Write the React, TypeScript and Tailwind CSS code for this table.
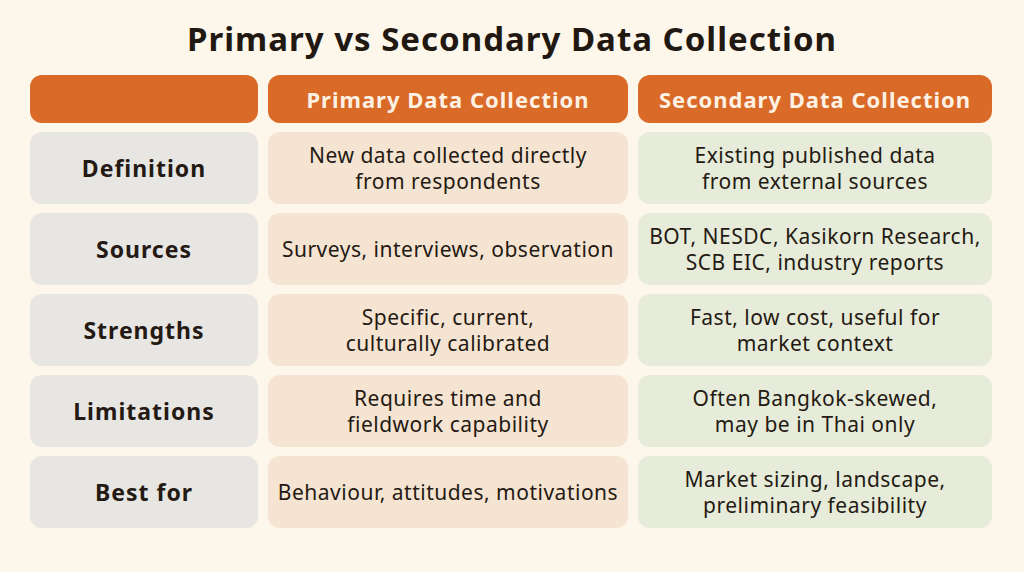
const ROWS = [
  {
    label: "Definition",
    primary: ["New data collected directly", "from respondents"],
    secondary: ["Existing published data", "from external sources"],
  },
  {
    label: "Sources",
    primary: ["Surveys, interviews, observation"],
    secondary: ["BOT, NESDC, Kasikorn Research,", "SCB EIC, industry reports"],
  },
  {
    label: "Strengths",
    primary: ["Specific, current,", "culturally calibrated"],
    secondary: ["Fast, low cost, useful for", "market context"],
  },
  {
    label: "Limitations",
    primary: ["Requires time and", "fieldwork capability"],
    secondary: ["Often Bangkok-skewed,", "may be in Thai only"],
  },
  {
    label: "Best for",
    primary: ["Behaviour, attitudes, motivations"],
    secondary: ["Market sizing, landscape,", "preliminary feasibility"],
  },
];

function Lines({ lines }: { lines: string[] }) {
  return (
    <>
      {lines.map((l) => (
        <span key={l} className="block whitespace-nowrap">
          {l}
        </span>
      ))}
    </>
  );
}

export default function App() {
  return (
    <div
      className="h-[572px] w-[1024px] overflow-hidden bg-[#fdf6ea] text-[#241a13]"
      style={{ fontFamily: '"Noto Sans", "Open Sans", sans-serif' }}
    >
      {/* Title */}
      <h1 className="pt-[18px] text-center text-[33px] font-bold leading-[42px] tracking-[1px] text-[#211811]">
        Primary vs Secondary Data Collection
      </h1>

      {/* Table */}
      <div className="mt-[15px] ml-[30px] grid grid-cols-[228px_360px_354px] gap-x-[10px] gap-y-[9px]">
        {/* Header row */}
        <div className="h-[48px] rounded-xl bg-[#d96a27]" />
        <div className="flex h-[48px] items-center justify-center rounded-xl bg-[#d96a27] text-[22px] font-bold tracking-[1px] text-[#fdf1e3]">
          Primary Data Collection
        </div>
        <div className="flex h-[48px] items-center justify-center rounded-xl bg-[#d96a27] text-[22px] font-bold tracking-[1px] text-[#fdf1e3]">
          Secondary Data Collection
        </div>

        {ROWS.map((row) => (
          <div key={row.label} className="contents">
            <div className="flex h-[72px] items-center justify-center rounded-xl bg-[#e7e6e3] text-[23px] font-bold tracking-[1px]">
              {row.label}
            </div>
            <div className="flex h-[72px] flex-col items-center justify-center rounded-xl bg-[#f6e4d2] text-center text-[21px] leading-[26px] tracking-[0.5px]">
              <Lines lines={row.primary} />
            </div>
            <div className="flex h-[72px] flex-col items-center justify-center rounded-xl bg-[#e6ecd9] text-center text-[21px] leading-[26px] tracking-[0.5px]">
              <Lines lines={row.secondary} />
            </div>
          </div>
        ))}
      </div>
    </div>
  );
}
